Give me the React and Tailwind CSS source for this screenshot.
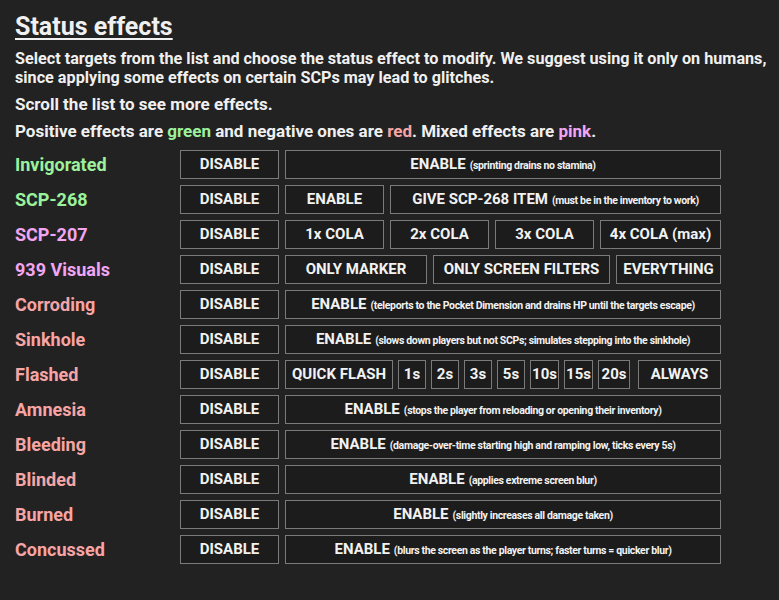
const GREEN = 'text-[#9cf29c]';
const PINK = 'text-[#f2a6f2]';
const RED = 'text-[#f7a5a5]';

function Btn({ label, note, className = '' }) {
  return (
    <div
      className={`h-[29px] border border-[#7a7a7a] bg-[#1c1c1c] flex items-center justify-center text-[15px] font-bold text-[#f2f2f2] whitespace-nowrap ${className}`}
    >
      {label}
      {note && (
        <span className="ml-[4px] text-[10.5px] tracking-[-0.35px] mt-[2px]">{note}</span>
      )}
    </div>
  );
}

const rows = [
  { name: 'Invigorated', color: GREEN, buttons: [{ label: 'ENABLE', note: '(sprinting drains no stamina)', className: 'flex-1' }] },
  {
    name: 'SCP-268',
    color: GREEN,
    buttons: [
      { label: 'ENABLE', className: 'w-[99px]' },
      { label: 'GIVE SCP-268 ITEM', note: '(must be in the inventory to work)', className: 'flex-1' },
    ],
  },
  {
    name: 'SCP-207',
    color: PINK,
    buttons: [
      { label: '1x COLA', className: 'w-[99px]' },
      { label: '2x COLA', className: 'w-[99px]' },
      { label: '3x COLA', className: 'w-[99px]' },
      { label: '4x COLA (max)', className: 'flex-1' },
    ],
  },
  {
    name: '939 Visuals',
    color: PINK,
    buttons: [
      { label: 'ONLY MARKER', className: 'w-[142px]' },
      { label: 'ONLY SCREEN FILTERS', className: 'w-[177px]' },
      { label: 'EVERYTHING', className: 'flex-1' },
    ],
  },
  { name: 'Corroding', color: RED, buttons: [{ label: 'ENABLE', note: '(teleports to the Pocket Dimension and drains HP until the targets escape)', className: 'flex-1' }] },
  { name: 'Sinkhole', color: RED, buttons: [{ label: 'ENABLE', note: '(slows down players but not SCPs; simulates stepping into the sinkhole)', className: 'flex-1' }] },
  {
    name: 'Flashed',
    color: RED,
    buttons: [
      { label: 'QUICK FLASH', className: 'w-[108px]' },
      { label: '1s', className: 'w-[28px]' },
      { label: '2s', className: 'w-[28px]' },
      { label: '3s', className: 'w-[28px]' },
      { label: '5s', className: 'w-[28px]' },
      { label: '10s', className: 'w-[29px]' },
      { label: '15s', className: 'w-[29px]' },
      { label: '20s', className: 'w-[32px]' },
      { label: 'ALWAYS', className: 'flex-1 ml-[3px]' },
    ],
    gap: 'gap-[5px]',
  },
  { name: 'Amnesia', color: RED, buttons: [{ label: 'ENABLE', note: '(stops the player from reloading or opening their inventory)', className: 'flex-1' }] },
  { name: 'Bleeding', color: RED, buttons: [{ label: 'ENABLE', note: '(damage-over-time starting high and ramping low, ticks every 5s)', className: 'flex-1' }] },
  { name: 'Blinded', color: RED, buttons: [{ label: 'ENABLE', note: '(applies extreme screen blur)', className: 'flex-1' }] },
  { name: 'Burned', color: RED, buttons: [{ label: 'ENABLE', note: '(slightly increases all damage taken)', className: 'flex-1' }] },
  { name: 'Concussed', color: RED, buttons: [{ label: 'ENABLE', note: '(blurs the screen as the player turns; faster turns = quicker blur)', className: 'flex-1' }] },
];

export default function App() {
  return (
    <div className="min-h-screen bg-[#222222] text-[#f0f0f0] px-[15px] pt-[12px] font-['Roboto',sans-serif]">
      <h1 className="text-[25px] leading-[30px] font-bold underline underline-offset-[3px] decoration-2">Status effects</h1>
      <p className="mt-[7px] text-[16.2px] leading-[19px] font-bold whitespace-nowrap">
        Select targets from the list and choose the status effect to modify. We suggest using it only on humans,
        <br />
        since applying some effects on certain SCPs may lead to glitches.
      </p>
      <p className="mt-[8px] text-[17px] leading-[19px] font-bold">Scroll the list to see more effects.</p>
      <p className="mt-[8px] text-[17px] leading-[19px] font-bold">
        Positive effects are <span className={GREEN}>green</span> and negative ones are{' '}
        <span className={RED}>red</span>. Mixed effects are <span className={PINK}>pink</span>.
      </p>

      <div className="mt-[9px] flex flex-col gap-[6px]">
        {rows.map((row) => (
          <div key={row.name} className="flex items-center">
            <div className={`w-[165px] text-[18px] font-bold ${row.color}`}>{row.name}</div>
            <div className="w-[541px] flex gap-[6px]">
              <Btn label="DISABLE" className="w-[99px]" />
              <div className={`flex-1 flex ${row.gap || 'gap-[6px]'}`}>
                {row.buttons.map((b) => (
                  <Btn key={b.label} {...b} />
                ))}
              </div>
            </div>
          </div>
        ))}
      </div>
    </div>
  );
}
